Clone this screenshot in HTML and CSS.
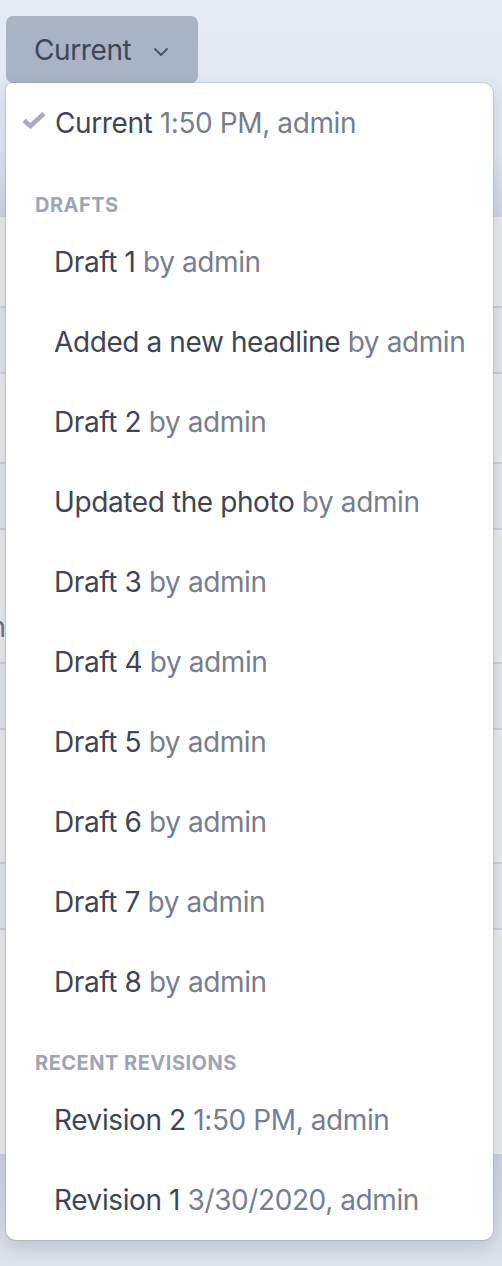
FILE: index.html
```html
<!DOCTYPE html>
<html>
<head>
<meta charset="utf-8">
<link rel="stylesheet" href="styles.css">
</head>
<body>
<div class="page">
  <div class="topbar"></div>
  <div class="table">
    <div class="row h92"></div>
    <div class="row h66 tint"></div>
    <div class="row h90"></div>
    <div class="row h66 tint"></div>
    <div class="row h134"><div class="cut"><span>admin</span></div></div>
    <div class="row h66 tint"></div>
    <div class="row h134"></div>
    <div class="row h66 tint"></div>
    <div class="row rest"></div>
  </div>
  <div class="footer"></div>

  <button class="btn"><span>Current</span><svg class="chev" width="16" height="10" viewBox="0 0 16 10"><path d="M2 2 L8 8 L14 2" fill="none" stroke="#4a5262" stroke-width="1.8" stroke-linecap="round" stroke-linejoin="round"/></svg></button>

  <div class="menu">
    <div class="item current">
      <svg class="check" width="24" height="18" viewBox="0 0 24 18"><path d="M2 9.5 L8.5 15 L22 2.5" fill="none" stroke="#a8aeb9" stroke-width="4.6" stroke-linejoin="miter"/></svg>
      <span class="label"><span class="main">Current</span> <span class="sub">1:50 PM, admin</span></span>
    </div>
    <div class="head">Drafts</div>
    <div class="item"><span class="label"><span class="main">Draft 1</span> <span class="sub">by admin</span></span></div>
    <div class="item"><span class="label"><span class="main">Added a new headline</span> <span class="sub">by admin</span></span></div>
    <div class="item"><span class="label"><span class="main">Draft 2</span> <span class="sub">by admin</span></span></div>
    <div class="item"><span class="label"><span class="main">Updated the photo</span> <span class="sub">by admin</span></span></div>
    <div class="item"><span class="label"><span class="main">Draft 3</span> <span class="sub">by admin</span></span></div>
    <div class="item"><span class="label"><span class="main">Draft 4</span> <span class="sub">by admin</span></span></div>
    <div class="item"><span class="label"><span class="main">Draft 5</span> <span class="sub">by admin</span></span></div>
    <div class="item"><span class="label"><span class="main">Draft 6</span> <span class="sub">by admin</span></span></div>
    <div class="item"><span class="label"><span class="main">Draft 7</span> <span class="sub">by admin</span></span></div>
    <div class="item"><span class="label"><span class="main">Draft 8</span> <span class="sub">by admin</span></span></div>
    <div class="head head2">Recent Revisions</div>
    <div class="item"><span class="label"><span class="main">Revision 2</span> <span class="sub">1:50 PM, admin</span></span></div>
    <div class="item"><span class="label"><span class="main">Revision 1</span> <span class="sub">3/30/2020, admin</span></span></div>
  </div>
</div>
</body>
</html>
```

FILE: styles.css
```css
html, body {
  margin: 0;
  padding: 0;
}
body {
  font-family: Inter, "Noto Sans", "Liberation Sans", sans-serif;
  background: #ebebec;
  width: 502px;
  height: 1266px;
  overflow: hidden;
}
.page {
  position: relative;
  width: 502px;
  height: 1266px;
  display: flex;
  flex-direction: column;
}
.topbar {
  height: 217px;
  flex: none;
  background: linear-gradient(#e5ebf4 0px, #e1e7f0 150px, #cdd5e1 217px);
}
.table {
  flex: 1;
  display: flex;
  flex-direction: column;
  background: #eaeaeb;
}
.row {
  flex: none;
  border-bottom: 2px solid #cbd0d9;
  box-sizing: border-box;
  position: relative;
}
.h92 { height: 91px; }
.h90 { height: 90px; }
.h66 { height: 66px; }
.h134 { height: 134px; }
.tint { background: #e2e4ea; }
.rest { flex: 1; border-bottom: 0; }
.cut {
  width: 6px;
  display: flex;
  justify-content: flex-end;
  padding-top: 80px;
  font-size: 28px;
  color: #6d7482;
  white-space: nowrap;
}
.footer {
  height: 112px;
  flex: none;
  background: linear-gradient(#c9d1de, #dfe4ec);
}
.btn {
  position: absolute;
  left: 6px;
  top: 16px;
  width: 192px;
  height: 67px;
  border: 0;
  border-radius: 7px;
  background: #a8b3c6;
  font-family: inherit;
  font-size: 28px;
  letter-spacing: -0.4px;
  color: #3e4655;
  display: flex;
  align-items: center;
  padding: 0 0 0 28px;
  gap: 22px;
  box-sizing: border-box;
}
.chev { margin-top: 4px; }
.menu {
  position: absolute;
  left: 6px;
  top: 83px;
  width: 487px;
  height: 1157px;
  background: #fff;
  border-radius: 6px 10px 10px 10px;
  box-shadow: 0 0 0 1px rgba(60, 70, 90, 0.14), 0 8px 18px rgba(60, 75, 100, 0.18);
  display: flex;
  flex-direction: column;
}
.item {
  height: 80px;
  flex: none;
  display: flex;
  align-items: center;
  padding-left: 48px;
  font-size: 28px;
  letter-spacing: -0.4px;
  white-space: pre;
}
.item.current {
  padding-left: 16px;
}
.check {
  margin-right: 9px;
  margin-top: -6px;
}
.main { color: #3e4655; }
.sub { color: #767f8e; }
.head {
  flex: none;
  height: 28px;
  line-height: 28px;
  padding: 28px 0 3px 29px;
  font-size: 20px;
  font-weight: 700;
  letter-spacing: 0.5px;
  text-transform: uppercase;
  color: #9ea6b3;
}
.head2 {
  padding-top: 27px;
  padding-bottom: 3px;
}
```
